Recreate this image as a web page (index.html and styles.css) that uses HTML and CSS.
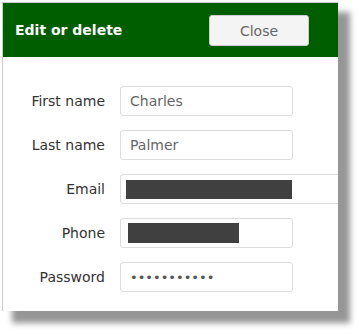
FILE: index.html
```html
<!DOCTYPE html>
<html lang="en">
<head>
  <meta charset="UTF-8">
  <title>Edit or delete</title>
  <link rel="stylesheet" href="styles.css">
</head>
<body>
  <div class="dialog">
    <div class="dialog-head">
      <h1>Edit or delete</h1>
      <button class="btn-close">Close</button>
    </div>
    <div class="dialog-body">
      <div class="row">
        <label>First name</label>
        <div class="field">Charles</div>
      </div>
      <div class="row">
        <label>Last name</label>
        <div class="field">Palmer</div>
      </div>
      <div class="row">
        <label>Email</label>
        <div class="field wide"><span class="redact redact-email"></span></div>
      </div>
      <div class="row">
        <label>Phone</label>
        <div class="field"><span class="redact redact-phone"></span></div>
      </div>
      <div class="row">
        <label>Password</label>
        <div class="field dots">•••••••••••</div>
      </div>
    </div>
  </div>
</body>
</html>
```

FILE: styles.css
```css
html, body { height: 100%; }
body { margin: 0; background: #fff; font-family: "DejaVu Sans", Verdana, sans-serif; color: #333; }
.dialog { margin: 2px 0 0 2px; width: 335px; height: 308px; border-left: 1px solid #ccc; border-top: 1px solid #ccc; background: #fff; box-shadow: 11px 11px 6px 1px #969696; overflow: hidden; }
.dialog-head { height: 54px; background: #005e00; display: flex; align-items: center; justify-content: space-between; padding: 0 29px 0 12px; }
.dialog-head h1 { margin: 0; font-size: 14px; font-weight: bold; color: #fff; }
.btn-close { width: 100px; height: 31px; margin-top: 1px; background: #f4f4f4; border: 1px solid #ccc; border-radius: 3px; color: #666; font-family: inherit; font-size: 14px; padding: 0; }
.dialog-body { padding-top: 29px; display: flex; flex-direction: column; gap: 14px; }
.row { display: flex; align-items: center; gap: 15px; }
.row label { width: 102px; flex-shrink: 0; text-align: right; font-size: 14px; color: #333; }
.field { box-sizing: border-box; width: 173px; height: 30px; flex-shrink: 0; border: 1px solid #ddd; border-radius: 3px; padding: 0 9px; display: flex; align-items: center; font-size: 14px; color: #666; }
.field.wide { width: 240px; border-radius: 3px 0 0 3px; padding: 0 5px; }
.redact { display: block; background: #404040; }
.redact-email { width: 166px; height: 19px; }
.redact-phone { width: 111px; height: 20px; margin-left: -2px; }
.dots { color: #555; font-size: 13px; letter-spacing: 0; }
```
